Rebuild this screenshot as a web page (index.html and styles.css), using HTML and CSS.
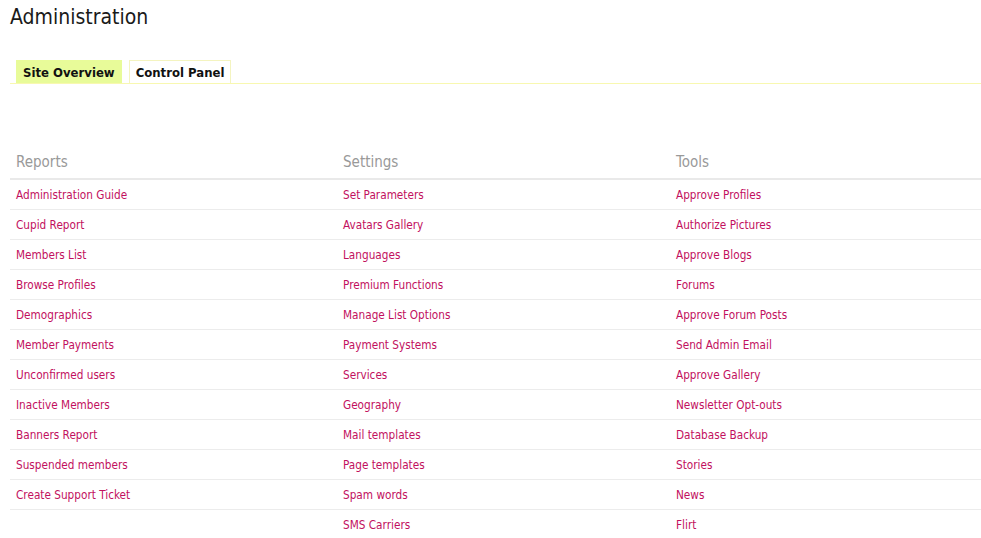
FILE: index.html
```html
<!DOCTYPE html>
<html lang="en">
<head>
    <meta charset="UTF-8">
    <title>Administration</title>
    <link rel="stylesheet" href="styles.css">
</head>
<body>
    <h1 class="page-title">Administration</h1>
    <div class="tabs">
        <a href="#" class="tab active">Site Overview</a>
        <a href="#" class="tab">Control Panel</a>
    </div>
    <table class="admin-table">
        <thead>
            <tr>
                <th class="col-reports">Reports</th>
                <th class="col-settings">Settings</th>
                <th class="col-tools">Tools</th>
            </tr>
        </thead>
        <tbody>
            <tr><td><a href="#">Administration Guide</a></td><td><a href="#">Set Parameters</a></td><td><a href="#">Approve Profiles</a></td></tr>
            <tr><td><a href="#">Cupid Report</a></td><td><a href="#">Avatars Gallery</a></td><td><a href="#">Authorize Pictures</a></td></tr>
            <tr><td><a href="#">Members List</a></td><td><a href="#">Languages</a></td><td><a href="#">Approve Blogs</a></td></tr>
            <tr><td><a href="#">Browse Profiles</a></td><td><a href="#">Premium Functions</a></td><td><a href="#">Forums</a></td></tr>
            <tr><td><a href="#">Demographics</a></td><td><a href="#">Manage List Options</a></td><td><a href="#">Approve Forum Posts</a></td></tr>
            <tr><td><a href="#">Member Payments</a></td><td><a href="#">Payment Systems</a></td><td><a href="#">Send Admin Email</a></td></tr>
            <tr><td><a href="#">Unconfirmed users</a></td><td><a href="#">Services</a></td><td><a href="#">Approve Gallery</a></td></tr>
            <tr><td><a href="#">Inactive Members</a></td><td><a href="#">Geography</a></td><td><a href="#">Newsletter Opt-outs</a></td></tr>
            <tr><td><a href="#">Banners Report</a></td><td><a href="#">Mail templates</a></td><td><a href="#">Database Backup</a></td></tr>
            <tr><td><a href="#">Suspended members</a></td><td><a href="#">Page templates</a></td><td><a href="#">Stories</a></td></tr>
            <tr><td><a href="#">Create Support Ticket</a></td><td><a href="#">Spam words</a></td><td><a href="#">News</a></td></tr>
            <tr class="last"><td></td><td><a href="#">SMS Carriers</a></td><td><a href="#">Flirt</a></td></tr>
        </tbody>
    </table>
</body>
</html>
```

FILE: styles.css
```css
body {
    font-family: "DejaVu Sans Condensed", "DejaVu Sans", sans-serif;
    margin: 0;
    padding: 0 0 0 10px;
    background: #fff;
    color: #222;
}

.page-title {
    font-size: 21px;
    font-weight: normal;
    margin: 0;
    padding-top: 4px;
    line-height: 26px;
    color: #1a1a1a;
}

.tabs {
    display: flex;
    gap: 7px;
    margin-top: 30px;
    padding-left: 6px;
    border-bottom: 1px solid #f8f8b0;
}

.tab {
    display: block;
    font-size: 13px;
    font-weight: bold;
    color: #111;
    text-decoration: none;
    padding: 0 6px;
    height: 22px;
    line-height: 23px;
    border: 1px solid #f4f4c0;
    border-bottom: none;
}

.tab.active {
    background: #e8fb99;
    border-color: #e8fb99;
}

.admin-table {
    margin-top: 68px;
    border-collapse: collapse;
    width: 971px;
}

.admin-table th {
    text-align: left;
    font-weight: normal;
    font-size: 15px;
    color: #999;
    padding: 1px 6px 0;
    height: 25px;
    vertical-align: top;
    border-bottom: 2px solid #e9e9e9;
}

.col-reports { width: 315px; }
.col-settings { width: 321px; }

.admin-table td {
    font-size: 11.7px;
    padding: 0 6px;
    height: 29px;
    border-bottom: 1px solid #ececec;
}

.admin-table tr.last td {
    border-bottom: none;
}

.admin-table a {
    color: #c2105e;
    text-decoration: none;
}
```
